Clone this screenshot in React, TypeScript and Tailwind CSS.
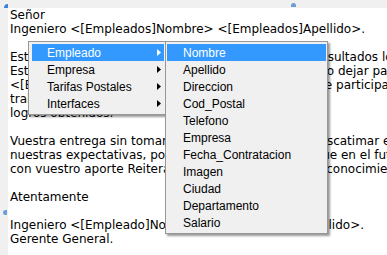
import React from "react";

const lines = [
  "Señor",
  "Ingeniero <[Empleados]Nombre> <[Empleados]Apellido>.",
  "",
  "Estamos muy satisfechos con todo  los excelentes resultados logrados",
  "Estos logros son fruto de todo su esfuerzo y no quiero dejar pasar la ocasión",
  "<[Empleado]Nombre> y de todo el gran equipo   que participa en el proyecto",
  "trabajó con dedicación para conseguir los",
  "logros obtenidos.",
  "",
  "Vuestra entrega sin tomar en cuenta horarios y sin escatimar esfuerzos",
  "nuestras expectativas, por lo que hoy  esperamos que en el futuro",
  "con vuestro aporte Reiteramos,  nuestro profundo reconocimiento",
  "",
  "Atentamente",
  "",
  "Ingeniero <[Empleado]Nombre>    <[Empleado]Apellido>.",
  "Gerente General.",
];

const mainItems = ["Empleado", "Empresa", "Tarifas Postales", "Interfaces"];
const subItems = [
  "Nombre",
  "Apellido",
  "Direccion",
  "Cod_Postal",
  "Telefono",
  "Empresa",
  "Fecha_Contratacion",
  "Imagen",
  "Ciudad",
  "Departamento",
  "Salario",
];

function Arrow({ white }: { white: boolean }) {
  return (
    <svg width="4" height="7" viewBox="0 0 4 7" className="shrink-0">
      <path d="M0 0 L4 3.5 L0 7 Z" fill={white ? "#ffffff" : "#000000"} />
    </svg>
  );
}

export default function App() {
  return (
    <div className="relative w-[387px] h-[255px] overflow-hidden bg-[#f0f0f0] pl-[8px] pt-[8px]">
      <div className="absolute left-[4px] top-[4px] w-[4px] h-[4px] rounded-tl-full bg-[#3b82d6]" />
      <div className="absolute left-[291px] top-[3px] w-[5px] h-[4px] rounded-t-full bg-[#6a9fd8]" />
      <div className="absolute left-[3px] top-[210px] w-[4px] h-[5px] rounded-l-full bg-[#6a9fd8]" />
      <div className="h-[247px] bg-white pl-[2px] overflow-hidden">
        <div className="flex flex-col text-[12px] leading-[14px] text-black [font-family:'DejaVu_Sans',sans-serif]">
          {lines.map((l, i) => (
            <div key={i} className="h-[14px] whitespace-pre">
              {l}
            </div>
          ))}
        </div>
      </div>

      {/* main menu */}
      <div className="absolute left-[28px] top-[41px] w-[138px] flex flex-col border border-[#979797] bg-[#f0f0f0] pt-[2px] pb-[2px] pl-[3px] pr-[1px] shadow-[2px_2px_2px_rgba(0,0,0,0.4)] [font-family:'Liberation_Sans',Arial,sans-serif] text-[12px]">
        {mainItems.map((m, i) => (
          <div
            key={m}
            className={
              "flex items-center justify-between h-[17px] pl-[15px] pr-[3px] " +
              (i === 0 ? "bg-[#3399ff] text-white" : "text-black")
            }
          >
            <span>{m}</span>
            <Arrow white={i === 0} />
          </div>
        ))}
      </div>

      {/* submenu */}
      <div className="absolute left-[165px] top-[41px] w-[163px] flex flex-col border border-[#979797] bg-[#f0f0f0] pt-[2px] pb-[2px] pl-[1px] pr-[1px] shadow-[2px_2px_2px_rgba(0,0,0,0.4)] [font-family:'Liberation_Sans',Arial,sans-serif] text-[12px]">
        {subItems.map((s, i) => (
          <div
            key={s}
            className={
              "flex items-center h-[17px] pl-[16px] " +
              (i === 0 ? "bg-[#3399ff] text-white" : "text-black")
            }
          >
            {s}
          </div>
        ))}
      </div>
    </div>
  );
}
